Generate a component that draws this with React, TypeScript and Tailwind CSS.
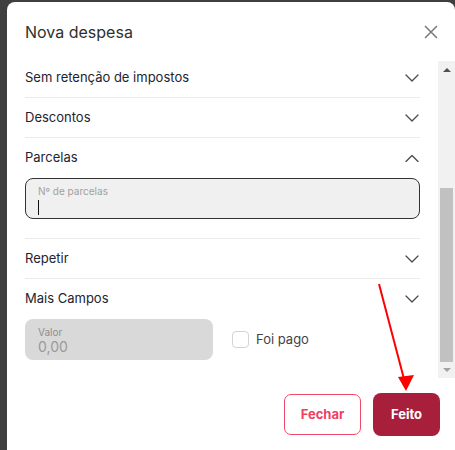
import React from 'react'

function Chevron({ up = false }: { up?: boolean }) {
  return (
    <svg width="14" height="8" viewBox="0 0 14 8" fill="none" className="mr-[1px]">
      <polyline
        points={up ? '1,7.5 7,1.5 13,7.5' : '1,1 7,7 13,1'}
        stroke="#4a4a4a"
        strokeWidth="1.3"
        strokeLinejoin="round"
        strokeLinecap="round"
      />
    </svg>
  )
}

function Row({ label, up = false, border = true }: { label: string; up?: boolean; border?: boolean }) {
  return (
    <div className={`flex h-10 items-center justify-between ${border ? 'border-b border-[#ebebeb]' : ''}`}>
      <span className="text-[13px] text-[#23232f]">{label}</span>
      <Chevron up={up} />
    </div>
  )
}

export default function App() {
  return (
    <div className="relative h-[450px] overflow-hidden bg-[#3f3f3f] pl-[7px] pt-[2px] font-['Inter',sans-serif]">
      <div className="flex h-[470px] w-[448px] flex-col rounded-[8px] bg-white">
        <div className="flex h-[59px] items-center justify-between pl-[18px] pr-[17px]">
          <h1 className="text-[16px] text-[#2f2f2f]">Nova despesa</h1>
          <svg width="14" height="14" viewBox="0 0 14 14">
            <path d="M1 1L13 13M13 1L1 13" stroke="#7a7a7a" strokeWidth="1.5" />
          </svg>
        </div>

        <div className="flex h-[317px]">
          <div className="w-[431px] overflow-hidden px-[18px]">
            <div className="mt-[-3px]">
              <Row label="Sem retenção de impostos" />
              <Row label="Descontos" />

              <div className="border-b border-[#ebebeb] pb-[19px]">
                <Row label="Parcelas" up border={false} />
                <div className="h-[41px] rounded-[8px] border border-[#333] bg-[#f0f0f0] pl-[12px] pt-[6px]">
                  <div className="text-[10px] leading-[13px] text-[#a0a0a0]">Nº de parcelas</div>
                  <div className="mt-[2px] h-[15px] w-[1px] bg-[#111]" />
                </div>
              </div>

              <Row label="Repetir" />
              <Row label="Mais Campos" border={false} />

              <div className="flex items-center">
                <div className="h-[41px] w-[188px] rounded-[8px] bg-[#d9d9d9] pl-[13px] pt-[7px]">
                  <div className="text-[10px] leading-[12px] text-[#8f8f8f]">Valor</div>
                  <div className="text-[14px] leading-[17px] text-[#9a9a9a]">0,00</div>
                </div>
                <div className="ml-[19px] h-[17px] w-[17px] rounded-[4px] border border-[#d4d4d4]" />
                <span className="ml-[7px] text-[13px] text-[#444]">Foi pago</span>
              </div>
            </div>
          </div>

          <div className="flex w-[17px] flex-col bg-[#f1f1f1]">
            <div className="flex h-[17px] items-center justify-center">
              <div className="h-0 w-0 border-x-[4px] border-b-[4px] border-x-transparent border-b-[#505050]" />
            </div>
            <div className="mx-[2px] mt-[110px] h-[174px] bg-[#c1c1c1]" />
            <div className="flex h-[16px] items-center justify-center">
              <div className="h-0 w-0 border-x-[4px] border-t-[4px] border-x-transparent border-t-[#a3a3a3]" />
            </div>
          </div>
        </div>

        <div className="flex justify-end gap-[12px] pr-[15px] pt-[15px]">
          <button className="mt-[1px] h-[41px] w-[77px] rounded-[7px] border border-[#f04a6a] bg-white text-[13px] font-bold text-[#ee3f62]">
            Fechar
          </button>
          <button className="h-[43px] w-[67px] rounded-[8px] bg-[#a81f3b] text-[13px] font-bold text-white">
            Feito
          </button>
        </div>
      </div>

      <svg className="absolute left-0 top-0" width="455" height="450" viewBox="0 0 455 450">
        <line x1="379" y1="284" x2="404" y2="379" stroke="#ff0000" strokeWidth="2" />
        <polygon points="398,377 414,375 406,391" fill="#ff0000" />
      </svg>
    </div>
  )
}
